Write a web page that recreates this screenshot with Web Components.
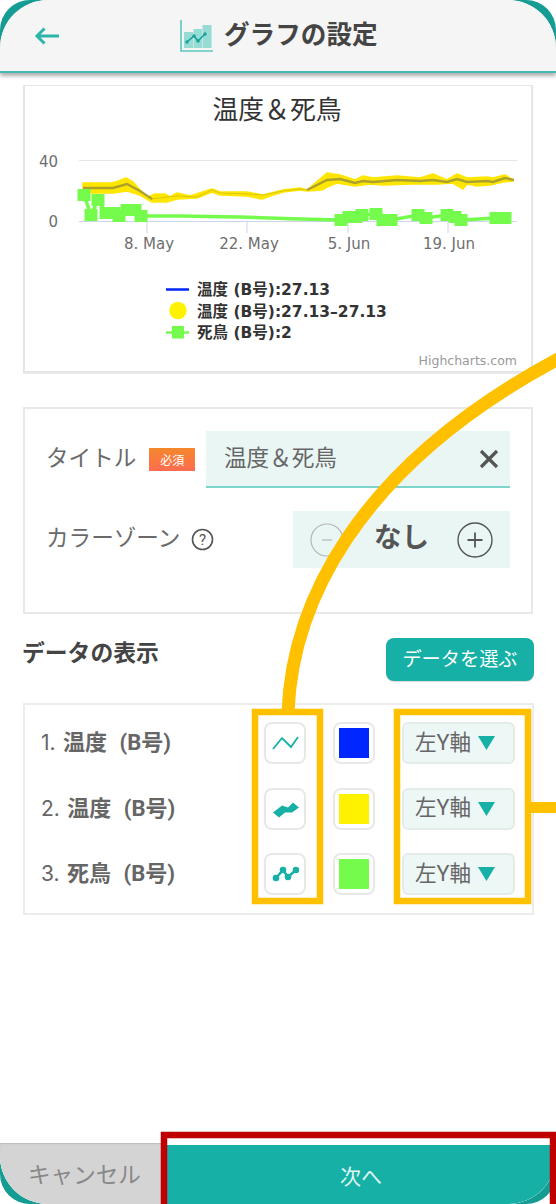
<!DOCTYPE html>
<html lang="ja"><head><meta charset="utf-8">
<style>
html,body{margin:0;padding:0;background:#fff}
body{font-family:Roboto,"Noto Sans CJK JP",sans-serif;color:#555}
</style></head><body>
<phone-frame>
  <screen-header slot="header">グラフの設定</screen-header>
  <chart-card></chart-card>
  <form-card></form-card>
  <data-section>
    <data-row num="1." name="温度 (B号)" kind="line" color="#0026ff"></data-row>
    <data-row num="2." name="温度 (B号)" kind="band" color="#fff200"></data-row>
    <data-row num="3." name="死鳥 (B号)" kind="marker" color="#75fb4c"></data-row>
  </data-section>
  <footer-bar slot="footer"></footer-bar>
  <note-overlay slot="overlay"></note-overlay>
</phone-frame>
<script>
const FONT='Roboto,"Noto Sans CJK JP",sans-serif';
function def(name,html){
  customElements.define(name,class extends HTMLElement{
    constructor(){super();this.attachShadow({mode:'open'}).innerHTML=typeof html==='function'?html(this):html;}
  });
}
def('phone-frame',`<style>
:host{display:block;width:556px;height:1204px;overflow:hidden;position:relative;background:#fff}
.ring{width:100%;height:100%;border-radius:30px;background:#159c93;overflow:hidden}
.screen{width:100%;height:100%;border-radius:48px;background:#fff;overflow:hidden;display:flex;flex-direction:column}
main{flex:1;display:flex;flex-direction:column;min-height:0}
</style>
<div class="ring"><div class="screen">
<slot name="header"></slot><main><slot></slot></main><slot name="footer"></slot>
</div></div><slot name="overlay"></slot>`);

def('screen-header',`<style>
:host{display:flex;align-items:center;flex:none;height:73px;box-sizing:border-box;background:#f5f5f5;border-bottom:2px solid #45b8b0;box-shadow:0 3px 4px rgba(0,0,0,.32);position:relative;z-index:1;padding-left:34px}
.back{flex:none;width:26px;height:24px;margin-right:120px}
.ic{flex:none;width:34px;height:34px;margin-right:10px}
.t{font:700 25.6px/1 ${FONT};color:#444;white-space:nowrap}
</style>
<svg class="back" viewBox="0 0 26 24" fill="none" stroke="#2bb5ab" stroke-width="3"><path d="M25 12H3M10.500 4.500L3 12l7.500 7.500"/></svg>
<svg class="ic" viewBox="0 0 34 34"><path d="M1 1v31h32" fill="none" stroke="#5cc8bf" stroke-width="1.6"/><g fill="#96dcd5"><rect x="4" y="13" width="9" height="16"/><rect x="13.500" y="10" width="8.500" height="19"/><rect x="22.500" y="6" width="9" height="23"/></g><path d="M7 23l7-6 4 5 7-7" fill="none" stroke="#17a399" stroke-width="1.6"/><g fill="#17a399"><circle cx="7" cy="23" r="1.7"/><circle cx="14" cy="17" r="1.7"/><circle cx="18" cy="22" r="1.7"/><circle cx="25" cy="15" r="1.7"/></g></svg>
<span class="t"><slot></slot></span>`);

function chart(){
 const up=[[83,183],[110,183],[116,182],[126,178],[133,182],[140,190],[148,197],[155,194],[165,194],[170,197],[177,193],[190,196],[212,189],[220,192],[247,192],[263,195],[283,190],[300,188],[307,190],[327,173],[340,175],[355,180],[363,176],[373,178],[397,176],[420,178],[433,174],[447,180],[457,174],[467,178],[487,177],[493,178],[505,175],[513,180]];
 const lo=[[513,181],[503,182],[490,185],[477,186],[467,184],[463,189],[453,183],[437,184],[413,184],[383,185],[370,184],[355,186],[337,183],[327,187],[322,190],[307,191],[300,190],[283,192],[273,195],[262,199],[247,196],[220,195],[212,192],[197,198],[177,199],[167,202],[152,202],[140,195],[127,191],[113,193],[83,193]];
 const band=up.concat(lo).map(p=>p.join(',')).join(' ');
 const m1=[[83,188],[113,188],[127,184],[140,191],[152,199]].map(p=>p.join(',')).join(' ');
 const m2=[[152,199],[167,197],[177,196],[197,197],[212,190],[220,193],[247,194],[263,195],[283,191],[300,189],[307,190]].map(p=>p.join(',')).join(' ');
 const m3=[[307,190],[327,180],[340,179],[355,183],[363,181],[373,182],[397,180],[420,181],[433,180],[447,182],[457,179],[467,182],[487,181],[493,182],[505,178],[514,180]].map(p=>p.join(',')).join(' ');
 const sq=[[84,195],[91,215],[98,200],[106,213],[114,213],[119,216],[127,210],[135,210],[141,216],[341,220],[349,217],[356,217],[362,215],[376,214],[383,220],[391,220],[418,215],[426,218],[447,215],[455,217],[461,220],[496,218],[505,218]];
 const gl=[[84,195],[91,215],[98,200],[106,213],[119,216],[127,210],[141,216],[180,216],[240,217],[300,219],[341,220],[362,215],[376,214],[391,220],[418,215],[426,218],[447,215],[461,220],[496,218],[505,218]].map(p=>p.join(',')).join(' ');
 const tick=x=>`<line x1="${x}" y1="222" x2="${x}" y2="233" stroke="#ccd6eb"/>`;
 return `<style>
:host{display:block;flex:none;box-sizing:border-box;margin:12px 23px 0 23px;width:510px;height:288px;background:#fff;border:2px solid #e6e6e6;border-top-width:1px;box-shadow:0 1px 1px rgba(0,0,0,.08)}
svg{display:block;margin:-86px 0 0 -25px}
.ax{font:400 15px "DejaVu Sans","Noto Sans CJK JP",sans-serif;fill:#6e6e6e}
.lg{font:700 15.5px "DejaVu Sans","Noto Sans CJK JP",sans-serif;fill:#333}
.ti{font:400 25.8px ${FONT};fill:#333}
.hc{font:400 12.5px "DejaVu Sans",sans-serif;fill:#999}
</style>
<svg width="556" height="372" viewBox="0 0 556 372">
<text class="ti" x="277" y="119" text-anchor="middle">温度＆死鳥</text>
<line x1="79" x2="517" y1="160.5" y2="160.5" stroke="#e6e6e6"/>
<line x1="79" x2="517" y1="221.5" y2="221.5" stroke="#ccd6eb"/>
${tick(147)}${tick(247)}${tick(348)}${tick(448)}
<text class="ax" x="58" y="167" text-anchor="end">40</text>
<text class="ax" x="58" y="227" text-anchor="end">0</text>
<text class="ax" x="149" y="249" text-anchor="middle">8. May</text>
<text class="ax" x="249" y="249" text-anchor="middle">22. May</text>
<text class="ax" x="349" y="249" text-anchor="middle">5. Jun</text>
<text class="ax" x="449" y="249" text-anchor="middle">19. Jun</text>
<polygon points="${band}" fill="#ffe600" stroke="#ffe600" stroke-width="1.500" stroke-linejoin="round"/>
<polyline points="${m1}" fill="none" stroke="#8f8a3a" stroke-width="2.4" opacity=".75"/>
<polyline points="${m2}" fill="none" stroke="#8f8a3a" stroke-width="1" opacity=".35"/>
<polyline points="${m3}" fill="none" stroke="#8f8a3a" stroke-width="2.4" opacity=".75"/>
<polyline points="${gl}" fill="none" stroke="#75fb4c" stroke-width="3.500"/>
<g fill="#75fb4c">${sq.map(p=>`<rect x="${p[0]-6.5}" y="${p[1]-6}" width="13" height="12"/>`).join('')}</g>
<line x1="166" x2="189" y1="289.5" y2="289.5" stroke="#0026ff" stroke-width="2.5"/>
<circle cx="178" cy="310.5" r="8.7" fill="#fff200"/>
<line x1="166" x2="189" y1="332.5" y2="332.5" stroke="#75fb4c" stroke-width="2.5"/>
<rect x="172" y="326" width="12" height="12.5" fill="#75fb4c"/>
<text class="lg" x="197" y="295">温度 (B号):27.13</text>
<text class="lg" x="197" y="316.500">温度 (B号):27.13–27.13</text>
<text class="lg" x="197" y="338">死鳥 (B号):2</text>
<text class="hc" x="517" y="365" text-anchor="end">Highcharts.com</text>
</svg>`;
}
def('chart-card',chart);

def('form-card',`<style>
:host{display:block;flex:none;box-sizing:border-box;margin:34px 23px 0;width:510px;height:207px;background:#fff;border:2px solid #e8e8e8;padding:22px 21px 0 21px}
.row{display:flex;align-items:center}
.lab{font-size:22.6px;color:#6a6a6a;white-space:nowrap;line-height:1}
.badge{margin-left:13px;width:46px;height:23px;display:flex;align-items:center;justify-content:center;font-size:12px;color:#fff;background:linear-gradient(#f4872c,#ff6c50)}
.input{margin-left:auto;width:304px;height:57px;box-sizing:border-box;background:#e9f6f4;border-bottom:2px solid #7dd4cb;display:flex;align-items:center;padding:0 11px 4px 18px;font-size:22.6px;color:#666}
.input svg{margin-left:auto;margin-top:4px}
.row2{margin-top:23px;justify-content:space-between}
.q{margin-left:11px;width:23px;height:23px;vertical-align:-5px}
.step{width:217px;height:57px;background:#e9f6f4;display:flex;align-items:center;justify-content:space-between;padding:0 17px 0 17px;box-sizing:border-box}
.val{font-size:27.5px;font-weight:700;color:#555;margin-top:-10px;margin-left:2px}
</style>
<div class="row"><span class="lab">タイトル</span><span class="badge">必須</span>
<div class="input"><span>温度＆死鳥</span><svg width="20" height="20" viewBox="0 0 20 20" stroke="#555" stroke-width="3.2"><path d="M2 2l16 16M18 2L2 18"/></svg></div></div>
<div class="row row2"><span class="lab">カラーゾーン<svg class="q" viewBox="0 0 23 23" fill="none" stroke="#555" stroke-width="1.6"><circle cx="11.500" cy="11.500" r="10"/><text x="11.500" y="17" text-anchor="middle" font-size="15" stroke="none" fill="#555" style="font-family:Roboto">?</text></svg></span>
<div class="step"><svg width="34" height="34" viewBox="0 0 34 34" fill="none" stroke="#b5b5b5" stroke-width="1.2"><circle cx="17" cy="17" r="16"/><path d="M12 17h10"/></svg><span class="val">なし</span><svg width="36" height="36" viewBox="0 0 36 36" fill="none" stroke="#555" stroke-width="1.4"><circle cx="18" cy="18" r="17"/><path d="M10.500 18h15M18 10.500v15" stroke-width="1.8"/></svg></div></div>`);

def('data-section',`<style>
:host{display:block;flex:none;margin:24px 22px 0 22px}
.hd{display:flex;justify-content:space-between;align-items:flex-start}
h2{margin:3px 0 0;font-size:22.8px;font-weight:700;color:#444;line-height:26px}
button{all:unset;box-sizing:border-box;width:148px;height:43px;background:#17b0a6;border-radius:8px;color:#fff;font:400 19.2px/43px ${FONT};text-align:center;box-shadow:0 1px 1px rgba(0,0,0,.15)}
.card{margin:22px 0 0 1px;width:511px;height:212px;box-sizing:border-box;border:2px solid #ececec;padding:17px 16px 0 16px;display:flex;flex-direction:column;gap:23.500px;background:#fff}
</style>
<div class="hd"><h2>データの表示</h2><button>データを選ぶ</button></div>
<div class="card"><slot></slot></div>`);

const ICONS={
 line:`<path d="M1 17l9-11 9 9 7-10" fill="none" stroke="#17b0a6" stroke-width="1.8"/>`,
 band:`<path d="M1 14.500l9-7 6 2 5-5 6 5-7 5h-7l-6 5z" fill="#17b0a6"/>`,
 marker:`<path d="M4 15l7-8 5 7 8-7" fill="none" stroke="#17b0a6" stroke-width="2.500"/><g fill="#17b0a6"><circle cx="4" cy="15" r="3.300"/><circle cx="11" cy="7" r="3.300"/><circle cx="16" cy="14" r="3.300"/><circle cx="24" cy="7" r="3.300"/></g>`};
def('data-row',el=>`<style>
:host{display:flex;align-items:center;height:42px}
.name{width:223px;flex:none;font-size:22px;color:#666;white-space:nowrap;margin-top:-6px}
.n{font-family:Inter,Roboto,sans-serif;font-size:21px;margin-right:2px}
b{font-weight:700;word-spacing:7px}
.btn{flex:none;width:42px;height:42px;box-sizing:border-box;border:2px solid #e8e8e8;border-radius:8px;display:flex;align-items:center;justify-content:center;background:#fff}
.sw{margin-left:27px}
.sw i{display:block;width:30px;height:30px;background:${el.getAttribute('color')}}
.sel{margin-left:27px;flex:none;width:113px;height:42px;box-sizing:border-box;border:2px solid #e4ecea;border-radius:6px;background:#edf7f5;display:flex;align-items:center;padding-left:11px;font-size:21.6px;color:#666;white-space:nowrap}
.sel span{margin-top:-6px}
.sel svg{margin-left:7px}
</style>
<span class="name"><span class="n">${el.getAttribute('num')}</span> <b>${el.getAttribute('name')}</b></span>
<span class="btn"><svg width="27" height="22" viewBox="0 0 27 22">${ICONS[el.getAttribute('kind')]}</svg></span>
<span class="btn sw"><i></i></span>
<span class="sel"><span>左Y軸</span><svg width="17" height="14" viewBox="0 0 17 14"><path d="M0 0h17L8.500 14z" fill="#17b0a6"/></svg></span>`);

def('footer-bar',`<style>
:host{display:flex;flex:none;height:61px;position:relative;background:#fff}
.c{width:166px;flex:none;background:#d4d4d4;box-shadow:inset 0 1px 1px rgba(0,0,0,.12);color:#888;font-size:22.6px;display:flex;align-items:center;box-sizing:border-box;padding-left:28px;white-space:nowrap}
.n{flex:1;margin-top:2px;background:#17b0a6;color:#dff5f3;font-size:21px;display:flex;align-items:center;justify-content:center}
</style><div class="c">キャンセル</div><div class="n">次へ</div>`);

def('note-overlay',`<style>
:host{position:absolute;inset:0;pointer-events:none;display:block}
svg{position:absolute;left:0;top:0}
</style>
<svg width="556" height="1204" viewBox="0 0 556 1204" fill="none">
<path d="M288 712C292 610 350 470 560 358" stroke="#ffc000" stroke-width="13"/>
<path d="M528 807.500H556" stroke="#ffc000" stroke-width="11"/>
<rect x="255" y="712" width="65" height="189" stroke="#ffc000" stroke-width="6.500"/>
<rect x="397" y="712" width="131" height="189" stroke="#ffc000" stroke-width="6.500"/>
<path d="M164 1204V1135H553V1204" stroke="#c00000" stroke-width="6.500"/>
</svg>`);
</script>
</body></html>
